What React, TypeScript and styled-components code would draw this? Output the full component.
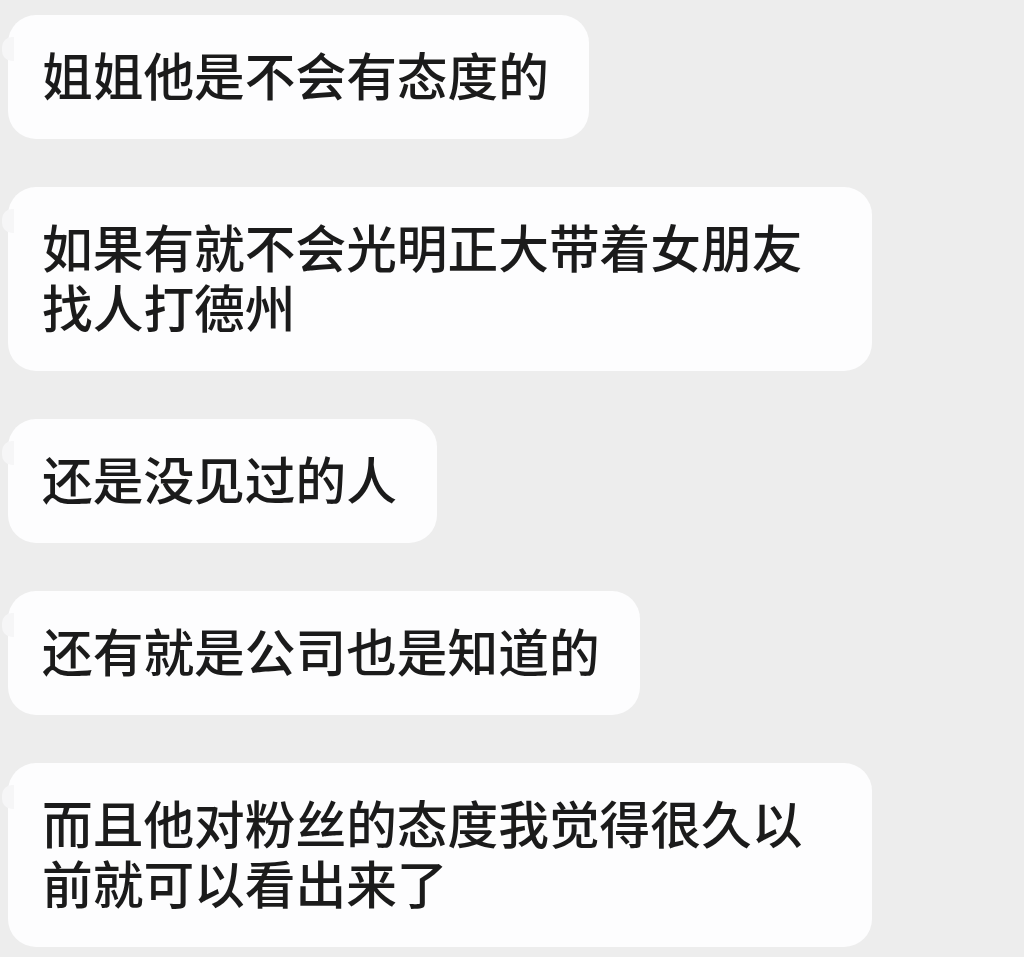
import styled, { createGlobalStyle } from "styled-components";

const GlobalStyle = createGlobalStyle`
	html, body {
		margin: 0;
		padding: 0;
		background: #ededed;
	}
`;

const Chat = styled.div`
	display: flex;
	flex-direction: column;
	align-items: flex-start;
	gap: 48px;
	min-height: 957px;
	box-sizing: border-box;
	padding: 15px 0 0 8px;
	background: #ededed;
	font-family: "Noto Sans CJK SC", "Noto Sans", sans-serif;
`;

const Bubble = styled.div`
	position: relative;
	box-sizing: border-box;
	max-width: 864px;
	padding: 29px 40px 35px 34px;
	border-radius: 28px;
	background: #fdfdfe;
	color: #1b1b1b;
	font-size: 50.7px;
	font-weight: 500;
	line-height: 60px;

	/* the little tail on the left */
	&::before {
		content: "";
		position: absolute;
		left: -6px;
		top: 22px;
		width: 12px;
		height: 24px;
		background: #f6f6f7;
		border-radius: 10px 0 0 10px;
	}
`;

const messages = [
	"姐姐他是不会有态度的",
	"如果有就不会光明正大带着女朋友找人打德州",
	"还是没见过的人",
	"还有就是公司也是知道的",
	"而且他对粉丝的态度我觉得很久以前就可以看出来了",
];

function App() {
	return (
		<>
			<GlobalStyle />
			<Chat>
				{messages.map((text, i) => (
					<Bubble key={i}>{text}</Bubble>
				))}
			</Chat>
		</>
	);
}

export default App;
